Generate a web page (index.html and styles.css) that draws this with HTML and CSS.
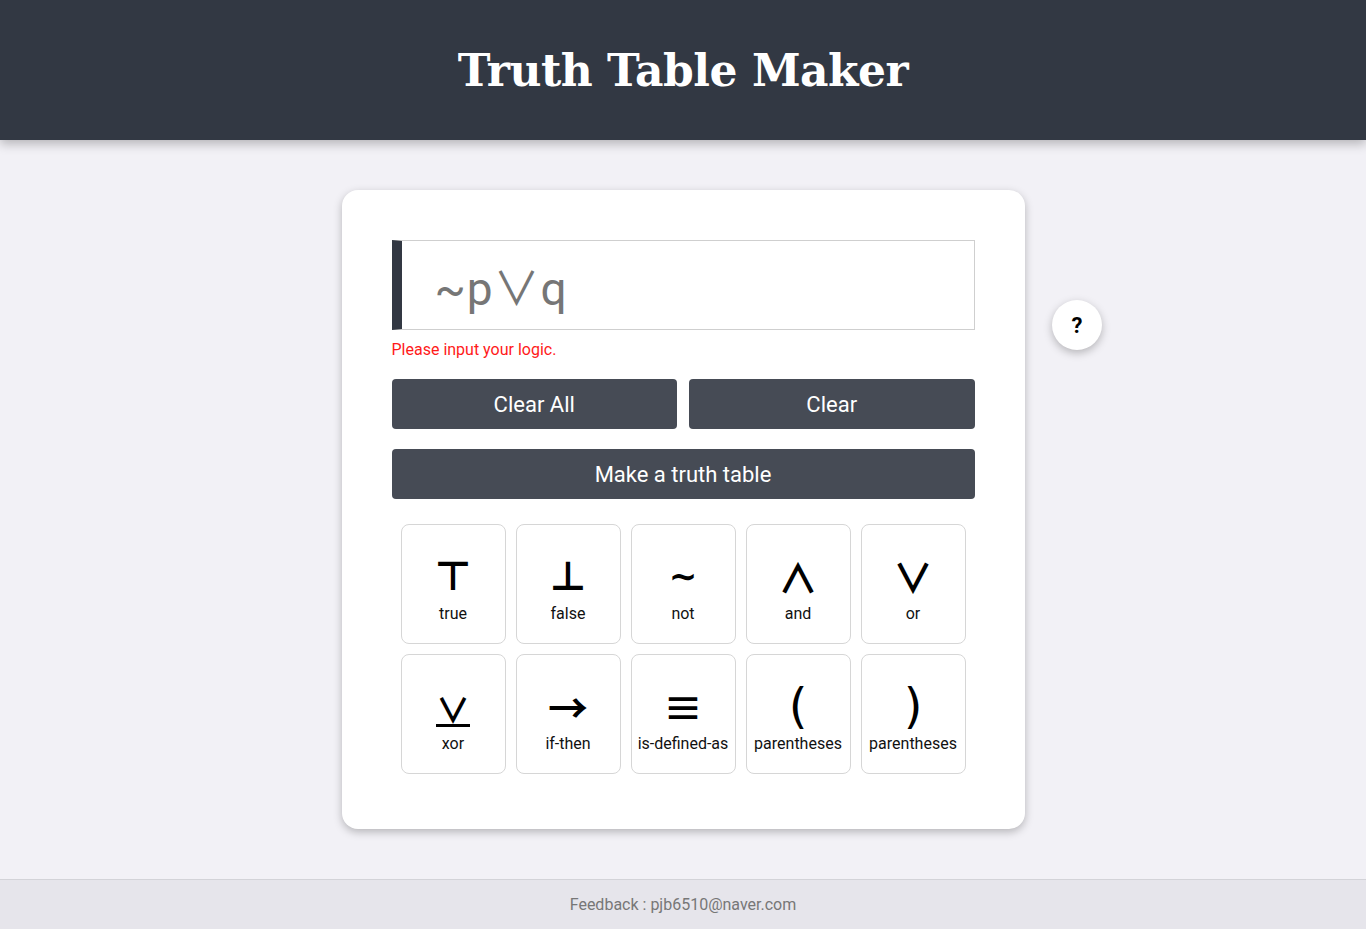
FILE: index.html
```html
<!DOCTYPE html>
<html lang="en">
<head>
<meta charset="utf-8">
<title>Truth Table Maker</title>
<link rel="stylesheet" href="styles.css">
</head>
<body>
<header class="top">
  <h1 class="title">Truth Table Maker</h1>
</header>
<main class="main">
  <section class="card">
    <div class="input-box"><span class="input-text">~p∨q</span></div>
    <p class="error">Please input your logic.</p>
    <div class="btn-row">
      <button class="btn">Clear All</button>
      <button class="btn">Clear</button>
    </div>
    <button class="btn btn-wide">Make a truth table</button>
    <div class="keys">
      <div class="key"><span class="sym bold">⊤</span><span class="lbl">true</span></div>
      <div class="key"><span class="sym bold">⊥</span><span class="lbl">false</span></div>
      <div class="key"><span class="sym bold tilde">∼</span><span class="lbl">not</span></div>
      <div class="key"><span class="sym cjk">∧</span><span class="lbl">and</span></div>
      <div class="key"><span class="sym cjk">∨</span><span class="lbl">or</span></div>
      <div class="key"><span class="sym cjk"><span class="xor">∨</span></span><span class="lbl">xor</span></div>
      <div class="key"><span class="sym cjk">→</span><span class="lbl">if-then</span></div>
      <div class="key"><span class="sym cjk">≡</span><span class="lbl">is-defined-as</span></div>
      <div class="key"><span class="sym paren">(</span><span class="lbl">parentheses</span></div>
      <div class="key"><span class="sym paren">)</span><span class="lbl">parentheses</span></div>
    </div>
  </section>
  <button class="help">?</button>
</main>
<footer class="foot">Feedback : pjb6510@naver.com</footer>
</body>
</html>
```
FILE: styles.css
```css
* { box-sizing: border-box; }
html, body { margin: 0; padding: 0; }
body {
  font-family: Roboto, "Noto Sans", sans-serif;
  background: #f2f1f6;
  min-height: 929px;
  display: flex;
  flex-direction: column;
}
.top {
  height: 140px;
  background: #323843;
  display: flex;
  align-items: center;
  justify-content: center;
  box-shadow: 0 4px 10px rgba(0,0,0,0.25);
  position: relative;
  z-index: 1;
}
.title {
  margin: 0;
  color: #fff;
  font-family: "DejaVu Serif", "Liberation Serif", serif;
  font-weight: bold;
  font-size: 44px;
  letter-spacing: -0.5px;
}
.main {
  flex: 1;
  display: flex;
  justify-content: center;
  align-items: flex-start;
  padding-top: 50px;
  position: relative;
}
.card {
  width: 683px;
  background: #fff;
  border-radius: 16px;
  padding: 50px 50px 55px;
  box-shadow: 0 3px 8px rgba(0,0,0,0.25);
}
.input-box {
  height: 90px;
  border: 1px solid #cfcfcf;
  border-left: 10px solid #323843;
  display: flex;
  align-items: center;
  padding-left: 33px;
}
.input-text {
  font-family: Roboto, "Noto Sans CJK JP", sans-serif;
  font-size: 46px;
  color: #767676;
  letter-spacing: 1px;
}
.error {
  margin: 9px 0 0;
  color: #ff1a1a;
  font-size: 16px;
  line-height: 22px;
}
.btn-row {
  display: flex;
  gap: 12px;
  margin-top: 18px;
}
.btn {
  flex: 1;
  height: 50px;
  border: none;
  border-radius: 4px;
  background: #464b55;
  color: #fff;
  font-family: Roboto, sans-serif;
  font-size: 22px;
  padding: 0;
}
.btn-wide {
  width: 100%;
  margin-top: 20px;
  display: block;
}
.keys {
  display: grid;
  grid-template-columns: repeat(5, 105px);
  gap: 10px;
  justify-content: center;
  margin-top: 25px;
}
.key {
  height: 120px;
  border: 1px solid #d6d6d6;
  border-radius: 8px;
  display: flex;
  flex-direction: column;
  align-items: center;
  justify-content: flex-start;
  padding-top: 26px;
}
.sym {
  font-family: "DejaVu Sans", sans-serif;
  font-size: 40px;
  line-height: 50px;
  height: 50px;
  color: #000;
}
.sym.bold {
  font-weight: bold;
}
.sym.tilde {
  font-size: 34px;
}
.sym.cjk {
  font-family: "Noto Sans CJK JP", "DejaVu Sans", sans-serif;
  font-size: 40px;
  font-weight: bold;
}
.xor {
  display: inline-block;
  font-size: 34px;
  line-height: 30px;
  border-bottom: 3px solid #000;
  margin-top: 10px;
}
.sym.paren {
  font-size: 48px;
}
.lbl {
  font-size: 16px;
  color: #111;
  margin-top: 3px;
}
.help {
  position: absolute;
  left: 1052px;
  top: 160px;
  width: 50px;
  height: 50px;
  border-radius: 50%;
  border: none;
  background: #fff;
  box-shadow: 0 3px 8px rgba(0,0,0,0.25);
  font-family: Roboto, sans-serif;
  font-weight: bold;
  font-size: 22px;
  color: #000;
  padding: 0;
}
.foot {
  height: 50px;
  background: #e6e5eb;
  border-top: 1px solid #d3d3d8;
  display: flex;
  align-items: center;
  justify-content: center;
  color: #777;
  font-size: 16px;
}
```
